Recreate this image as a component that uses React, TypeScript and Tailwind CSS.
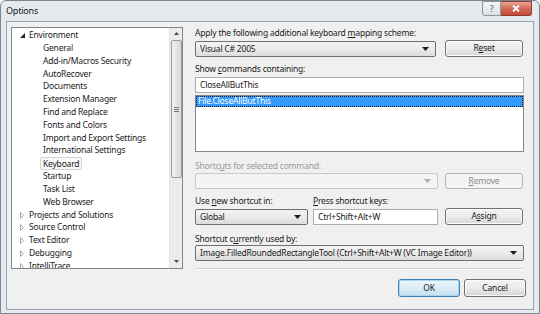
import React from "react";

const font = "font-['Noto_Sans','DejaVu_Sans',sans-serif] tracking-[-0.2px]";

const treeItems = [
  { label: "Environment", level: 0, expanded: true },
  { label: "General", level: 1 },
  { label: "Add-in/Macros Security", level: 1 },
  { label: "AutoRecover", level: 1 },
  { label: "Documents", level: 1 },
  { label: "Extension Manager", level: 1 },
  { label: "Find and Replace", level: 1 },
  { label: "Fonts and Colors", level: 1 },
  { label: "Import and Export Settings", level: 1 },
  { label: "International Settings", level: 1 },
  { label: "Keyboard", level: 1, selected: true },
  { label: "Startup", level: 1 },
  { label: "Task List", level: 1 },
  { label: "Web Browser", level: 1 },
  { label: "Projects and Solutions", level: 0 },
  { label: "Source Control", level: 0 },
  { label: "Text Editor", level: 0 },
  { label: "Debugging", level: 0 },
  { label: "IntelliTrace", level: 0 },
];

const DropArrow = ({ disabled }: { disabled?: boolean }) => (
  <svg width="7" height="4" viewBox="0 0 7 4">
    <path d="M0 0h7L3.5 4z" fill={disabled ? "#b0b0b0" : "#1a1a1a"} />
  </svg>
);

const Combo = ({
  value,
  className,
}: {
  value: string;
  className: string;
}) => (
  <div
    className={`flex items-center justify-between pl-[4px] pr-[6px] border border-[#707070] rounded-[2px] bg-gradient-to-b from-[#f3f3f3] via-[#ebebeb] to-[#dcdcdc] text-[8.5px] text-[#1a1a1a] ${className}`}
  >
    <span className="truncate">{value}</span>
    <DropArrow />
  </div>
);

const Button = ({
  children,
  className,
  disabled,
  primary,
}: {
  children: React.ReactNode;
  className: string;
  disabled?: boolean;
  primary?: boolean;
}) => {
  const look = disabled
    ? "border-[#b5b5b5] bg-[#f4f4f4] text-[#8d8d8d]"
    : primary
    ? "border-[#3c7fb1] bg-gradient-to-b from-[#eef7fc] via-[#dcecf7] to-[#c6dfef] text-[#1a1a1a] shadow-[inset_0_0_0_1px_#a9d7f3]"
    : "border-[#707070] bg-gradient-to-b from-[#f2f2f2] via-[#ebebeb] to-[#d6d6d6] text-[#1a1a1a] shadow-[inset_0_0_0_1px_#fcfcfc]";
  return (
    <div
      className={`flex items-center justify-center border rounded-[3px] text-[8.5px] ${look} ${className}`}
    >
      {children}
    </div>
  );
};

const Label = ({
  children,
  className = "",
}: {
  children: React.ReactNode;
  className?: string;
}) => (
  <div className={`h-[12px] leading-[12px] text-[8.5px] ${className}`}>
    {children}
  </div>
);

const U = ({ children }: { children: React.ReactNode }) => (
  <span className="underline underline-offset-[1px]">{children}</span>
);

const Tree = () => (
  <div className="relative w-[172px] h-[242px] border border-[#828790] bg-white overflow-hidden">
    <div className="pt-[1px]">
      {treeItems.map((item) => (
        <div
          key={item.label}
          className={`flex items-center h-[12.83px] text-[8.5px] text-[#1a1a1a] ${
            item.level === 0 ? "pl-[8px]" : "pl-[31px]"
          }`}
        >
          {item.level === 0 && (
            <span className="w-[9px] flex items-center">
              {item.expanded ? (
                <svg width="5" height="5" viewBox="0 0 5 5">
                  <path d="M5 0V5H0z" fill="#262626" />
                </svg>
              ) : (
                <svg width="4" height="7" viewBox="0 0 4 7">
                  <path
                    d="M0.5 0.5L3.5 3.5L0.5 6.5z"
                    fill="none"
                    stroke="#a6a6a6"
                    strokeWidth="1"
                  />
                </svg>
              )}
            </span>
          )}
          <span
            className={
              item.selected
                ? "-ml-[3px] px-[2px] leading-[11px] border border-[#d5d5d5] rounded-[2px] bg-[#fafafa]"
                : ""
            }
          >
            {item.label}
          </span>
        </div>
      ))}
    </div>
    <div className="absolute right-0 top-0 bottom-0 w-[13px] bg-[#ececec] border-l border-[#e2e2e2] flex flex-col items-center">
      <div className="h-[11px] flex items-center justify-center">
        <svg width="5" height="3" viewBox="0 0 5 3">
          <path d="M0 3L2.5 0L5 3z" fill="#4a4a4a" />
        </svg>
      </div>
      <div className="w-[11px] h-[138px] mt-[1px] border border-[#9a9a9a] rounded-[2px] bg-gradient-to-r from-[#f2f2f2] to-[#d8d8d8] flex items-center justify-center">
        <div className="flex flex-col gap-[1px]">
          <div className="w-[5px] h-px bg-[#7a7a7a]" />
          <div className="w-[5px] h-px bg-[#7a7a7a]" />
          <div className="w-[5px] h-px bg-[#7a7a7a]" />
        </div>
      </div>
      <div className="flex-1" />
      <div className="h-[14px] flex items-center justify-center">
        <svg width="5" height="3" viewBox="0 0 5 3">
          <path d="M0 0h5L2.5 3z" fill="#4a4a4a" />
        </svg>
      </div>
    </div>
  </div>
);

export default function App() {
  return (
    <div
      className={`w-[540px] h-[314px] flex flex-col bg-[#e6eaef] border border-[#7d8792] rounded-t-[6px] ${font}`}
    >
      <div className="h-[20px] flex items-start justify-between pl-[5px] pr-[7px]">
        <span className="mt-[4px] text-[9px] leading-[12px] text-[#1a1a1a]">
          Options
        </span>
        <div className="flex">
          <div className="w-[19px] h-[15px] border border-[#8a939e] rounded-bl-[3px] bg-gradient-to-b from-[#f4f6f8] to-[#dde2e8] flex items-center justify-center text-[9px] leading-none text-[#5a5a5a]">
            ?
          </div>
          <div className="w-[31px] h-[15px] border border-l-0 border-[#8e3b32] rounded-br-[3px] bg-gradient-to-b from-[#e8a493] via-[#d36a57] to-[#c24a35] flex items-center justify-center">
            <svg width="8" height="7" viewBox="0 0 8 7">
              <path
                d="M1 0.5L7 6.5M7 0.5L1 6.5"
                stroke="#ffffff"
                strokeWidth="1.8"
              />
            </svg>
          </div>
        </div>
      </div>

      <div className="flex-1 mx-[5px] mb-[3px] border border-[#9ba5b1] bg-[#f0f0f0] flex gap-[12px] pl-[4px] pt-[5px]">
        <Tree />

        <div className="w-[331px] flex flex-col text-[#1a1a1a]">
          <Label>
            Apply the following additional keyboard <U>m</U>apping scheme:
          </Label>
          <div className="mt-[1px] flex justify-between items-end h-[17px]">
            <Combo value="Visual C# 2005" className="w-[241px] h-[16px]" />
            <Button className="w-[78px] h-[17px] mr-[3px]">
              R<U>e</U>set
            </Button>
          </div>

          <Label className="mt-[6px]">
            Show <U>c</U>ommands containing:
          </Label>
          <div className="mt-[2px] w-[329px] h-[16px] border border-[#abadb3] bg-white flex items-center pl-[4px] text-[8.5px]">
            CloseAllButThis
          </div>
          <div className="mt-[2px] w-[329px] h-[57px] border border-[#828790] bg-white">
            <div className="h-[11px] bg-[#3399ff] border border-dotted border-[#1a1a1a] flex items-center pl-[1px] text-[8.5px] text-white">
              File.CloseAllButThis
            </div>
          </div>

          <Label className="mt-[8px] text-[#9a9a9a]">
            Shortc<U>u</U>ts for selected command:
          </Label>
          <div className="mt-[1px] flex justify-between h-[16px]">
            <div className="w-[243px] h-[16px] border border-[#c8c8c8] rounded-[2px] bg-[#f4f4f4] flex items-center justify-end pr-[6px]">
              <DropArrow disabled />
            </div>
            <Button disabled className="w-[78px] h-[16px] mr-[3px]">
              <U>R</U>emove
            </Button>
          </div>

          <div className="mt-[6px] flex">
            <Label className="w-[118px]">
              Use <U>n</U>ew shortcut in:
            </Label>
            <Label>
              <U>P</U>ress shortcut keys:
            </Label>
          </div>
          <div className="mt-[1px] flex h-[17px] items-end">
            <Combo value="Global" className="w-[113px] h-[16px]" />
            <div className="ml-[5px] w-[125px] h-[16px] border border-[#abadb3] bg-white flex items-center pl-[4px] text-[8.5px]">
              Ctrl+Shift+Alt+W
            </div>
            <Button className="ml-[7px] w-[78px] h-[17px]">
              A<U>s</U>sign
            </Button>
          </div>

          <Label className="mt-[8px]">
            Shortcut c<U>u</U>rrently used by:
          </Label>
          <Combo
            value="Image.FilledRoundedRectangleTool (Ctrl+Shift+Alt+W (VC Image Editor))"
            className="w-[329px] h-[16px]"
          />

          <div className="mt-[7px] w-[329px] h-[2px] border-t border-[#d5d5d5] border-b-white border-b" />

          <div className="mt-[9px] flex justify-end gap-[4px]">
            <Button primary className="w-[62px] h-[18px]">
              OK
            </Button>
            <Button className="w-[62px] h-[18px]">Cancel</Button>
          </div>
        </div>
      </div>
    </div>
  );
}
